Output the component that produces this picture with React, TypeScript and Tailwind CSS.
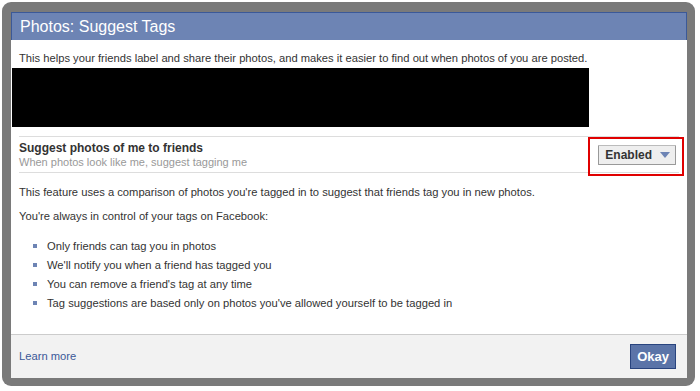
import React from "react";

const bullets = [
  "Only friends can tag you in photos",
  "We'll notify you when a friend has tagged you",
  "You can remove a friend's tag at any time",
  "Tag suggestions are based only on photos you've allowed yourself to be tagged in",
];

export default function App() {
  return (
    <div className="w-[700px] h-[391px] bg-white pt-[2px] pl-[2px] font-['Liberation_Sans',Arial,sans-serif] text-[#333]">
      <div className="w-[693px] h-[384px] rounded-[9px] bg-[#7a7a7a] pt-[10px] pl-[9px] pr-[8px] pb-[8px]">
        <div className="flex flex-col h-full bg-white">
          {/* header */}
          <div className="h-[28px] bg-[#6d84b4] border border-[#3b5998] border-b-0 flex items-center px-[8px]">
            <span className="text-white text-[16px] leading-none">Photos: Suggest Tags</span>
          </div>

          {/* body */}
          <div className="flex-1 px-[8px] pt-[11px] text-[11.2px] leading-[14px]">
            <p>This helps your friends label and share their photos, and makes it easier to find out when photos of you are posted.</p>
            <div className="ml-[-7px] mt-[3px] w-[577px] h-[59px] bg-black" />

            <div className="relative mt-[9px] border-t border-b border-[#ddd] h-[37px] flex items-center">
              <div className="flex flex-col">
                <span className="font-bold text-[12px] leading-[14px]">Suggest photos of me to friends</span>
                <span className="text-[#999] text-[11px] leading-[14px]">When photos look like me, suggest tagging me</span>
              </div>
              <div className="relative ml-auto mr-[3px]">
                <div className="flex items-center gap-[8px] h-[20px] pl-[6px] pr-[5px] bg-[#eeeeee] border border-[#999] border-t-[#bbb] rounded-[1px]">
                  <span className="font-bold text-[12px] leading-none">Enabled</span>
                  <svg width="10" height="6" viewBox="0 0 10 6">
                    <path d="M0 0 H10 L5 6 Z" fill="#6d84b4" />
                  </svg>
                </div>
                <div className="absolute left-[-10px] right-[-8px] top-[-8px] bottom-[-11px] border-[2px] border-[#e00000]" />
              </div>
            </div>

            <p className="mt-[12px]">This feature uses a comparison of photos you're tagged in to suggest that friends tag you in new photos.</p>
            <p className="mt-[10px]">You're always in control of your tags on Facebook:</p>
            <ul className="mt-[16px] flex flex-col gap-[5px]">
              {bullets.map((b) => (
                <li key={b} className="flex items-center pl-[14px]">
                  <span className="w-[4px] h-[4px] bg-[#6d84b4] mr-[10px]" />
                  <span>{b}</span>
                </li>
              ))}
            </ul>
          </div>

          {/* footer */}
          <div className="h-[44px] bg-[#f2f2f2] border-t border-[#ccc] flex items-center px-[8px]">
            <a className="text-[#3b5998] text-[11.2px]">Learn more</a>
            <button className="ml-auto mr-[3px] h-[25px] px-[6px] bg-[#5b74a8] border border-[#29447e] text-white font-bold text-[13px] leading-none">
              Okay
            </button>
          </div>
        </div>
      </div>
    </div>
  );
}
